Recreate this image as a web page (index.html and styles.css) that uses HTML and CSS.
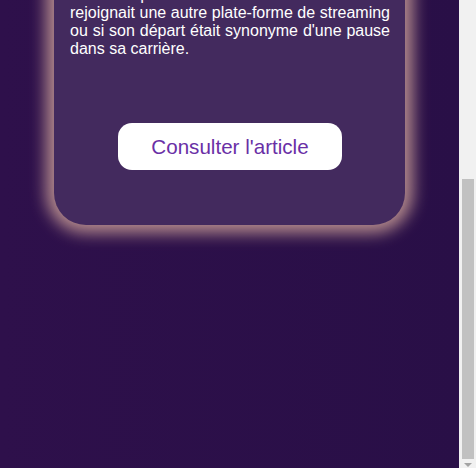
FILE: index.html
```html
<!DOCTYPE html>
<html lang="fr">
<head>
<meta charset="utf-8">
<title>Article</title>
<link rel="stylesheet" href="styles.css">
</head>
<body>
<div class="window">
  <div class="scroller" id="scroller">
    <main class="page">
      <article class="card">
        <h2 class="card-title">Une streameuse quitte la plate-forme</h2>
        <p class="card-text">La créatrice de contenu, suivie par plusieurs centaines de milliers d'abonnés, a annoncé mardi soir la fin de sa collaboration avec la plate-forme sur laquelle elle diffusait ses parties en direct depuis plusieurs années. Dans un message publié sur les réseaux sociaux, elle a remercié sa communauté. Elle n'a toutefois pas<br>communiqué dans l'immédiat si elle rejoignait une autre plate-forme de streaming ou si son départ était synonyme d'une pause dans sa carrière.</p>
        <div class="card-actions">
          <a class="btn" href="#">Consulter l'article</a>
        </div>
      </article>
    </main>
  </div>
  <div class="scrollbar" aria-hidden="true">
    <div class="scrollbar-space"></div>
    <div class="scrollbar-thumb"></div>
    <div class="scrollbar-button"><span class="scrollbar-arrow"></span></div>
  </div>
</div>
<script>
  (function () {
    var s = document.getElementById('scroller');
    function toBottom() { s.scrollTop = s.scrollHeight; }
    toBottom();
    window.addEventListener('load', toBottom);
  })();
</script>
</body>
</html>
```

FILE: styles.css
```css
html, body {
  margin: 0;
  padding: 0;
  height: 100%;
  overflow: hidden;
}

body {
  font-family: "Liberation Sans", Arial, sans-serif;
  background: #2b0f48;
}

.window {
  height: 100%;
  display: grid;
  grid-template-columns: 1fr 17px;
}

.scroller {
  height: 100%;
  overflow-y: auto;
  scrollbar-width: none;
  background: linear-gradient(to right, #2e104b, #290f47);
}

.scroller::-webkit-scrollbar {
  display: none;
}

.scrollbar {
  background: #f1f1f1;
  display: flex;
  flex-direction: column;
  height: 100%;
}

.scrollbar-space {
  flex: 1;
}

.scrollbar-thumb {
  height: 280px;
  margin: 0 2px 0 3px;
  background: #c1c1c1;
}

.scrollbar-button {
  height: 9px;
  padding-top: 4px;
  box-sizing: border-box;
}

.scrollbar-arrow {
  display: block;
  width: 0;
  height: 0;
  margin-left: 5px;
  border-left: 4px solid transparent;
  border-right: 4px solid transparent;
  border-top: 4px solid #a3a3a3;
}

.page {
  min-height: 767px;
  box-sizing: border-box;
  display: flex;
  flex-direction: column;
  justify-content: flex-end;
  padding-bottom: 243px;
}

.card {
  width: 351px;
  margin: 0 auto;
  box-sizing: border-box;
  padding: 20px 15px 55px 16px;
  background: #432a5e;
  border-radius: 32px;
  box-shadow: 0 0 16px 8px #b48b8c;
  color: #ffffff;
}

.card-title {
  margin: 0 0 16px;
  font-size: 24px;
  line-height: 1.2;
  font-weight: bold;
}

.card-text {
  margin: 0;
  font-size: 16px;
  line-height: normal;
  text-align: justify;
}

.card-actions {
  display: flex;
  justify-content: center;
  margin-top: 65px;
}

.btn {
  display: flex;
  align-items: center;
  justify-content: center;
  width: 224px;
  height: 47px;
  background: #ffffff;
  border-radius: 14px;
  color: #6a2fa6;
  font-size: 20.6px;
  text-decoration: none;
}
```
